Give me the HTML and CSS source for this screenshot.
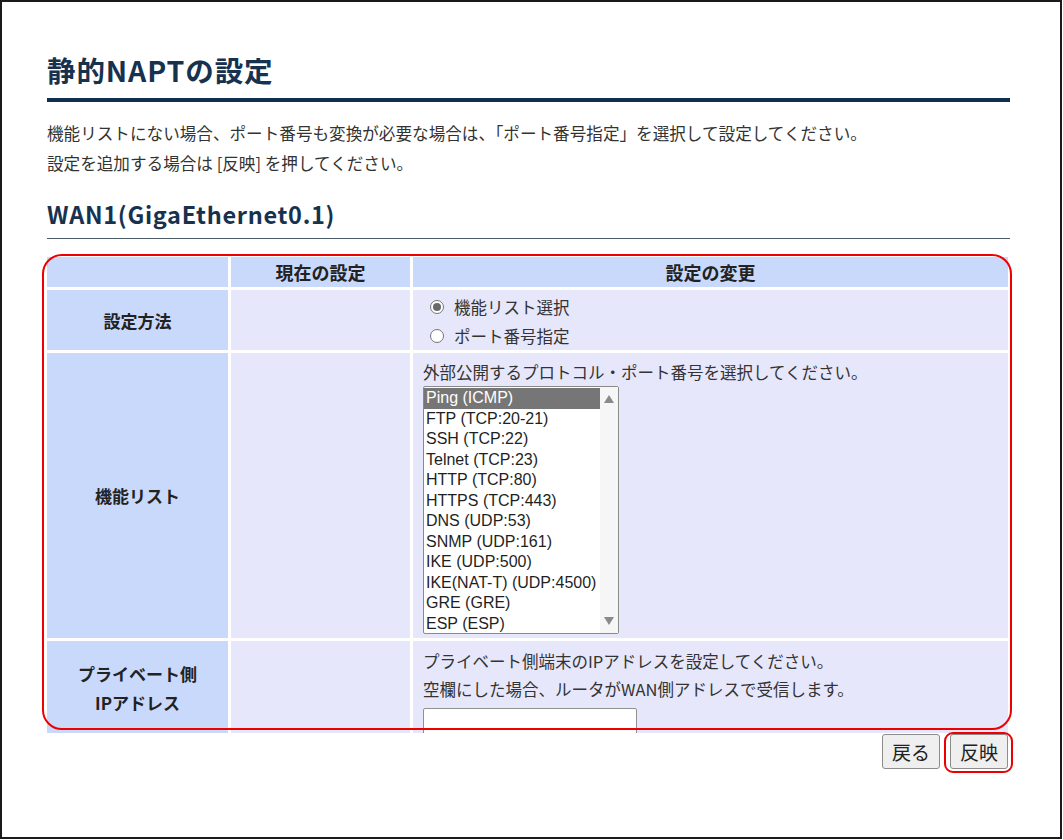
FILE: index.html
```html
<!DOCTYPE html>
<html lang="ja">
<head>
<meta charset="utf-8">
<title>静的NAPTの設定</title>
<link rel="stylesheet" href="styles.css">
</head>
<body>
<div class="frame">
  <div class="content">
    <h1 class="title">静的NAPTの設定</h1>
    <p class="desc">機能リストにない場合、ポート番号も変換が必要な場合は、「ポート番号指定」を選択して設定してください。<br>設定を追加する場合は [反映] を押してください。</p>
    <h2 class="sub">WAN1(GigaEthernet0.1)</h2>

    <div class="table-wrap">
      <div class="table-clip">
        <div class="grid">
          <div class="th corner"></div>
          <div class="th">現在の設定</div>
          <div class="th">設定の変更</div>

          <div class="rh">設定方法</div>
          <div class="td"></div>
          <div class="td radios">
            <label class="radio"><span class="dot on"></span>機能リスト選択</label>
            <label class="radio"><span class="dot"></span>ポート番号指定</label>
          </div>

          <div class="rh">機能リスト</div>
          <div class="td"></div>
          <div class="td func">
            <div class="line">外部公開するプロトコル・ポート番号を選択してください。</div>
            <div class="listbox">
              <ul class="items">
                <li class="sel">Ping (ICMP)</li>
                <li>FTP (TCP:20-21)</li>
                <li>SSH (TCP:22)</li>
                <li>Telnet (TCP:23)</li>
                <li>HTTP (TCP:80)</li>
                <li>HTTPS (TCP:443)</li>
                <li>DNS (UDP:53)</li>
                <li>SNMP (UDP:161)</li>
                <li>IKE (UDP:500)</li>
                <li>IKE(NAT-T) (UDP:4500)</li>
                <li>GRE (GRE)</li>
                <li>ESP (ESP)</li>
              </ul>
              <div class="scrollbar">
                <span class="arrow up"></span>
                <span class="arrow down"></span>
              </div>
            </div>
          </div>

          <div class="rh two">プライベート側<br>IPアドレス</div>
          <div class="td"></div>
          <div class="td priv">
            <div class="line">プライベート側端末のIPアドレスを設定してください。</div>
            <div class="line">空欄にした場合、ルータがWAN側アドレスで受信します。</div>
            <input class="ip" type="text">
          </div>
        </div>
      </div>
      <div class="mark mark-table"></div>
    </div>

    <div class="buttons">
      <button class="btn">戻る</button>
      <span class="btn-wrap"><button class="btn">反映</button><span class="mark mark-btn"></span></span>
    </div>
  </div>
</div>
</body>
</html>
```

FILE: styles.css
```css
html, body {
  margin: 0;
  padding: 0;
  background: #fff;
}
body {
  font-family: "Noto Sans CJK JP", "Liberation Sans", sans-serif;
  color: #333;
}
.frame {
  width: 1062px;
  height: 839px;
  box-sizing: border-box;
  border: 2px solid #1a1a1a;
  overflow: hidden;
}
.content {
  padding: 0 50px 0 45px;
}
.title {
  margin: 51px 0 0;
  font-size: 28.5px;
  line-height: 34px;
  font-weight: 700;
  letter-spacing: 0.9px;
  color: #17324f;
  padding-bottom: 11px;
  border-bottom: 4px solid #0f2f4f;
}
.desc {
  margin: 16px 0 0;
  font-size: 16.6px;
  line-height: 30px;
  color: #333;
}
.sub {
  margin: 22px 0 0;
  font-size: 23.5px;
  line-height: 28px;
  font-weight: 700;
  letter-spacing: 0.7px;
  color: #17324f;
  padding-bottom: 10px;
  border-bottom: 1px solid #4d5b69;
}
.table-wrap {
  position: relative;
  margin-top: 18px;
}
.table-clip {
  height: 476px;
  overflow: hidden;
}
.grid {
  display: grid;
  grid-template-columns: 181px 179px 595px;
  grid-template-rows: 30px 60px 285px 110px;
  column-gap: 3px;
  row-gap: 3px;
}
.th, .rh {
  background: #c9d9fb;
  font-weight: 700;
  color: #222;
  display: flex;
  align-items: center;
  justify-content: center;
  text-align: center;
}
.th {
  font-size: 18px;
}
.rh {
  font-size: 17px;
}
.rh.two {
  line-height: 29px;
  align-items: flex-start;
  padding-top: 18px;
}
.td {
  background: #e7e7fb;
  font-size: 16.5px;
  color: #333;
}
.radios {
  padding: 3px 0 0 17px;
  display: flex;
  flex-direction: column;
}
.radio {
  display: flex;
  align-items: center;
  height: 29px;
}
.dot {
  width: 14px;
  height: 14px;
  border: 1px solid #767676;
  border-radius: 50%;
  background: #fff;
  box-sizing: border-box;
  margin-right: 10px;
  position: relative;
}
.dot.on::after {
  content: "";
  position: absolute;
  left: 2px;
  top: 2px;
  width: 8px;
  height: 8px;
  border-radius: 50%;
  background: #6a6a6a;
}
.func {
  padding: 6px 0 0 10px;
}
.func .line {
  line-height: 26px;
}
.listbox {
  margin-top: 1px;
  width: 196px;
  height: 248px;
  box-sizing: border-box;
  border: 1px solid #8a8a8a;
  border-radius: 2px;
  background: #fff;
  display: flex;
}
.items {
  list-style: none;
  margin: 0;
  padding: 1px 0 0 0;
  flex: 1;
  font-family: "Liberation Sans", Arial, sans-serif;
  font-size: 16px;
  color: #1f1f1f;
}
.items li {
  height: 20.5px;
  line-height: 20px;
  padding-left: 2px;
  white-space: nowrap;
}
.items li.sel {
  background: #767676;
  color: #fff;
}
.scrollbar {
  width: 18px;
  background: #f6f6f6;
  display: flex;
  flex-direction: column;
  justify-content: space-between;
  align-items: center;
  padding: 8px 0 8px;
}
.arrow {
  width: 0;
  height: 0;
  border-left: 5.5px solid transparent;
  border-right: 5.5px solid transparent;
}
.arrow.up {
  border-bottom: 8px solid #8a8a8a;
}
.arrow.down {
  border-top: 8px solid #8a8a8a;
}
.priv {
  padding: 6px 0 0 10px;
}
.priv .line {
  line-height: 28px;
}
.ip {
  display: block;
  margin-top: 5px;
  width: 214px;
  height: 28px;
  box-sizing: border-box;
  border: 1px solid #909090;
  border-radius: 2px;
  background: #fff;
}
.mark {
  position: absolute;
  border: 2.5px solid #ee0000;
  box-sizing: border-box;
  pointer-events: none;
}
.mark-table {
  left: -5px;
  top: -3px;
  width: 970px;
  height: 476px;
  border-radius: 20px;
}
.buttons {
  display: flex;
  justify-content: flex-end;
  gap: 10px;
  margin-top: 1px;
  padding-right: 2px;
}
.btn-wrap {
  position: relative;
  display: inline-block;
}
.btn {
  display: block;
  height: 35px;
  padding: 0 9px;
  font-family: "Noto Sans CJK JP", sans-serif;
  font-size: 19px;
  line-height: 33px;
  color: #222;
  background: #efefef;
  border: 1px solid #8c8c8c;
  border-radius: 3px;
}
.mark-btn {
  left: -6px;
  top: -2px;
  right: -5px;
  bottom: -4px;
  border-radius: 9px;
}
```
